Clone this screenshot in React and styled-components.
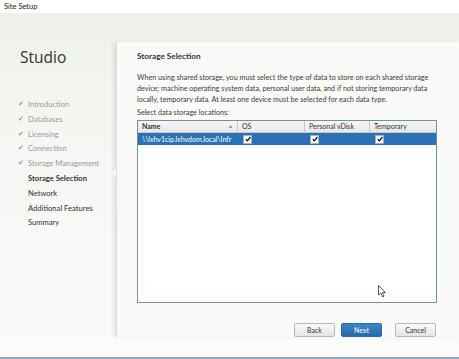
import styled, { createGlobalStyle } from 'styled-components';

const Global = createGlobalStyle`
  html, body { margin: 0; padding: 0; }
  body { font-family: "Lato", "Open Sans", sans-serif; background: #fff; }
`;

const Window = styled.div`
  width: 459px;
  height: 359px;
  display: flex;
  flex-direction: column;
  overflow: hidden;
  position: relative;
  border-bottom: 2px solid #8fa9bf;
  box-sizing: border-box;
`;

const TitleBar = styled.div`
  height: 16px;
  background: #ffffff;
  font-size: 7.5px;
  color: #222;
  padding-left: 4px;
  display: flex;
  align-items: center;
`;

const Body = styled.div`
  flex: 1;
  display: flex;
  background: linear-gradient(180deg, #eef1ea 0%, #f6f7f4 40%, #fbfbfa 100%);
`;

const Sidebar = styled.div`
  width: 116px;
  padding-top: 34px;
  box-sizing: border-box;
`;

const Brand = styled.div`
  font-family: "Open Sans", sans-serif;
  font-size: 15.5px;
  color: #333;
  padding-left: 20px;
  height: 20px;
  line-height: 20px;
`;

const Steps = styled.ul`
  list-style: none;
  margin: 30px 0 0;
  padding: 0 0 0 18px;
`;

const Step = styled.li`
  height: 14.8px;
  line-height: 14.8px;
  font-size: 7.6px;
  color: ${p => (p.$done ? '#9a9a9a' : '#333')};
  font-weight: ${p => (p.$active ? 700 : 400)};
  display: flex;
  align-items: center;
  gap: 2px;
  padding-left: ${p => (p.$done ? 0 : 10)}px;
`;

const Check = styled.span`
  width: 8px;
  font-size: 6.5px;
  color: #9a9a9a;
`;

const Panel = styled.div`
  flex: 1;
  margin-top: 29px;
  margin-bottom: 20px;
  background: #fafaf9;
  box-shadow: -3px 0 3px rgba(0, 0, 0, 0.08);
  border-left: 1px solid #dcdcdc;
  padding: 8px 20px 0 20px;
  display: flex;
  flex-direction: column;
  position: relative;
`;

const Notch = styled.div`
  position: absolute;
  left: -5px;
  top: 127px;
  width: 0;
  height: 0;
  border-top: 4px solid transparent;
  border-bottom: 4px solid transparent;
  border-right: 4px solid #fafaf9;
`;

const Heading = styled.div`
  font-size: 8.2px;
  font-weight: 700;
  color: #333;
  height: 12px;
  line-height: 12px;
`;

const Para = styled.p`
  margin: 10px 0 0;
  font-size: 7.2px;
  line-height: 11px;
  color: #3a3a3a;
  white-space: nowrap;
`;

const Label = styled.div`
  margin-top: 2px;
  font-size: 7.2px;
  color: #3a3a3a;
  line-height: 11px;
`;

const Table = styled.div`
  margin-top: 2px;
  width: 300px;
  height: 183px;
  border: 1.5px solid #6f8fab;
  background: #ffffff;
  box-sizing: border-box;
`;

const Row = styled.div`
  display: grid;
  grid-template-columns: 100px 67px 65px 1fr;
  height: 12px;
  background: ${p => (p.$selected ? '#2a72b5' : 'linear-gradient(#f6f6f6, #e8e8e8)')};
  border-bottom: ${p => (p.$selected ? 'none' : '1px solid #c8c8c8')};
  box-sizing: border-box;
`;

const Cell = styled.div`
  font-size: 7px;
  line-height: 11px;
  padding-left: 4px;
  color: ${p => (p.$selected ? '#ffffff' : '#333')};
  font-weight: ${p => (p.$bold ? 700 : 400)};
  border-right: ${p => (p.$header ? '1px solid #c8c8c8' : 'none')};
  white-space: nowrap;
  overflow: hidden;
  display: flex;
  align-items: center;
  justify-content: ${p => (p.$spread ? 'space-between' : 'flex-start')};
  padding-right: ${p => (p.$spread ? '4px' : '0')};
`;

const Sort = styled.span`
  font-size: 5px;
  color: #888;
`;

const Box = styled.span`
  width: 7px;
  height: 7px;
  background: #fff;
  border: 1px solid #9bb0c6;
  display: inline-flex;
  align-items: center;
  justify-content: center;
  margin-left: 1px;
`;

const Buttons = styled.div`
  display: flex;
  justify-content: flex-end;
  gap: 6px;
  margin-top: 20px;
  width: 299px;
`;

const Button = styled.button`
  width: 41px;
  height: 14px;
  font-family: inherit;
  font-size: 7px;
  padding: 0;
  border-radius: 2px;
  border: 1px solid ${p => (p.$primary ? '#2d6aa3' : '#b8b8b8')};
  color: ${p => (p.$primary ? '#fff' : '#333')};
  background: ${p => (p.$primary ? 'linear-gradient(#3c86c8, #2569a8)' : 'linear-gradient(#fbfbfb, #e4e4e4)')};
  margin-left: ${p => p.$gap || 0}px;
`;

const Cursor = styled.svg`
  position: absolute;
  left: 378px;
  top: 285px;
`;

const Tick = () => (
  <svg width="6" height="6" viewBox="0 0 6 6">
    <path d="M0.8 3.2 L2.4 4.8 L5.4 1" stroke="#111" strokeWidth="1.3" fill="none" />
  </svg>
);

const steps = [
  ['Introduction', 'done'],
  ['Databases', 'done'],
  ['Licensing', 'done'],
  ['Connection', 'done'],
  ['Storage Management', 'done'],
  ['Storage Selection', 'active'],
  ['Network'],
  ['Additional Features'],
  ['Summary'],
];

export default function App() {
  return (
    <>
      <Global />
      <Window>
        <TitleBar>Site Setup</TitleBar>
        <Body>
          <Sidebar>
            <Brand>Studio</Brand>
            <Steps>
              {steps.map(([name, state]) => (
                <Step key={name} $done={state === 'done'} $active={state === 'active'}>
                  {state === 'done' && <Check>✔</Check>}
                  {name}
                </Step>
              ))}
            </Steps>
          </Sidebar>
          <Panel>
            <Notch />
            <Heading>Storage Selection</Heading>
            <Para>
              When using shared storage, you must select the type of data to store on each shared storage<br />
              device; machine operating system data, personal user data, and if not storing temporary data<br />
              locally, temporary data. At least one device must be selected for each data type.
            </Para>
            <Label>Select data storage locations:</Label>
            <Table>
              <Row>
                <Cell $header $bold $spread>Name<Sort>▲</Sort></Cell>
                <Cell $header>OS</Cell>
                <Cell $header>Personal vDisk</Cell>
                <Cell>Temporary</Cell>
              </Row>
              <Row $selected>
                <Cell $selected>\\lxhv1cip.lxhvdom.local\Infr</Cell>
                <Cell $selected><Box><Tick /></Box></Cell>
                <Cell $selected><Box><Tick /></Box></Cell>
                <Cell $selected><Box><Tick /></Box></Cell>
              </Row>
            </Table>
            <Buttons>
              <Button>Back</Button>
              <Button $primary>Next</Button>
              <Button $gap={7}>Cancel</Button>
            </Buttons>
          </Panel>
        </Body>
        <Cursor width="9" height="13" viewBox="0 0 9 13">
          <path d="M0.5 0.5 L0.5 10 L2.8 8 L4.5 12 L6 11.3 L4.4 7.6 L7.5 7.6 Z" fill="#fff" stroke="#444" strokeWidth="0.9" />
        </Cursor>
      </Window>
    </>
  );
}
